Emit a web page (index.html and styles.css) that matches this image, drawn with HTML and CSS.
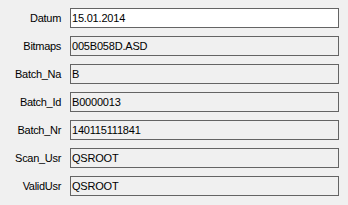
FILE: index.html
```html
<!DOCTYPE html>
<html>
<head>
<meta charset="utf-8">
<link rel="stylesheet" href="styles.css">
</head>
<body>
<div class="form">
  <div class="row"><span class="label">Datum</span><div class="field editable">15.01.2014</div></div>
  <div class="row"><span class="label">Bitmaps</span><div class="field">005B058D.ASD</div></div>
  <div class="row"><span class="label">Batch_Na</span><div class="field">B</div></div>
  <div class="row"><span class="label">Batch_Id</span><div class="field">B0000013</div></div>
  <div class="row"><span class="label">Batch_Nr</span><div class="field">140115111841</div></div>
  <div class="row"><span class="label">Scan_Usr</span><div class="field">QSROOT</div></div>
  <div class="row"><span class="label">ValidUsr</span><div class="field">QSROOT</div></div>
</div>
</body>
</html>
```
FILE: styles.css
```css
html, body {
  margin: 0;
  padding: 0;
  background: #f0f0f0;
  width: 348px;
  height: 205px;
  overflow: hidden;
}
.form {
  display: flex;
  flex-direction: column;
  gap: 8px;
  padding: 8px 0 0 0;
  font-family: "Liberation Sans", Arial, sans-serif;
  font-size: 11px;
  color: #000;
}
.row {
  display: grid;
  grid-template-columns: 61px 269px;
  column-gap: 9px;
  align-items: center;
}
.label {
  text-align: right;
  letter-spacing: -0.3px;
}
.field {
  box-sizing: border-box;
  height: 20px;
  border: 1px solid #646464;
  background: #f0f0f0;
  padding: 2px 0 0 1px;
  line-height: 14px;
  letter-spacing: -0.2px;
  white-space: nowrap;
}
.field.editable {
  background: #ffffff;
}
```
